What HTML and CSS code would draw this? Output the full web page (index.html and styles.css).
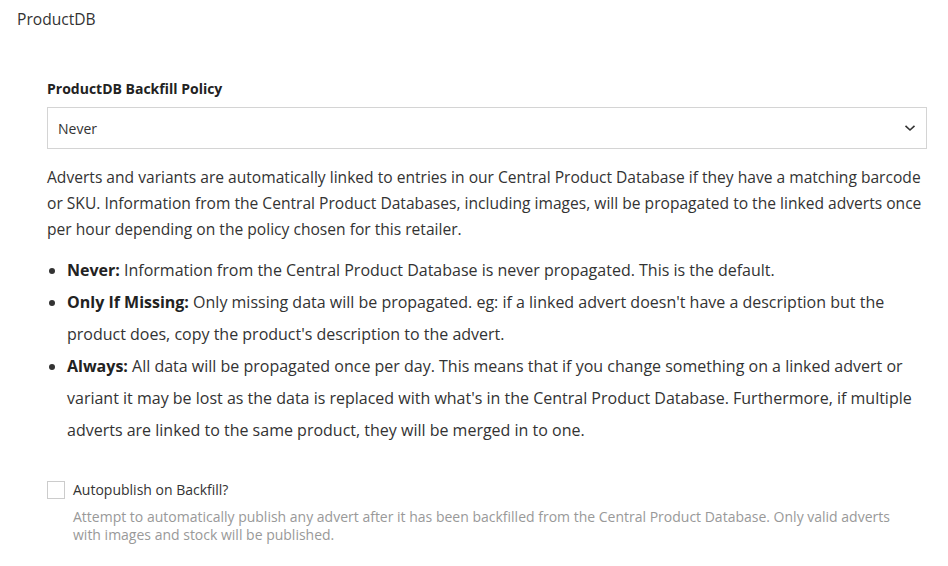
FILE: index.html
```html
<!DOCTYPE html>
<html>
<head>
<meta charset="utf-8">
<link rel="stylesheet" href="styles.css">
</head>
<body>
<div class="page">
  <h1 class="title">ProductDB</h1>
  <div class="section">
    <label class="field-label">ProductDB Backfill Policy</label>
    <div class="select">
      <span class="select-value">Never</span>
      <svg class="chevron" width="12" height="8" viewBox="0 0 12 8"><path d="M1.5 1.8 L6 6 L10.5 1.8" fill="none" stroke="#333" stroke-width="1.6"/></svg>
    </div>
    <p class="desc">Adverts and variants are automatically linked to entries in our Central Product Database if they have a matching barcode or SKU. Information from the Central Product Databases, including images, will be propagated to the linked adverts once per hour depending on the policy chosen for this retailer.</p>
    <ul class="policies">
      <li><b>Never:</b> Information from the Central Product Database is never propagated. This is the default.</li>
      <li><b>Only If Missing:</b> Only missing data will be propagated. eg: if a linked advert doesn't have a description but the product does, copy the product's description to the advert.</li>
      <li><b>Always:</b> All data will be propagated once per day. This means that if you change something on a linked advert or variant it may be lost as the data is replaced with what's in the Central Product Database. Furthermore, if multiple adverts are linked to the same product, they will be merged in to one.</li>
    </ul>
    <div class="check-row">
      <span class="checkbox"></span>
      <div class="check-text">
        <div class="check-label">Autopublish on Backfill?</div>
        <div class="check-help">Attempt to automatically publish any advert after it has been backfilled from the Central Product Database. Only valid adverts with images and stock will be published.</div>
      </div>
    </div>
  </div>
</div>
</body>
</html>
```
FILE: styles.css
```css
* { box-sizing: border-box; }
html, body { margin: 0; padding: 0; background: #fff; }
body {
  font-family: "Open Sans", "Liberation Sans", sans-serif;
  color: #333;
}
.page { padding: 8px 21px 0 17px; }
.title {
  margin: 0;
  font-size: 15.6px;
  font-weight: 400;
  line-height: 22px;
  color: #333;
}
.section { padding: 50px 0 0 30px; }
.field-label {
  display: block;
  font-size: 14px;
  font-weight: 700;
  line-height: 18px;
  color: #222;
  margin-bottom: 9px;
}
.select {
  height: 42px;
  border: 1px solid #d4d4d4;
  display: flex;
  align-items: center;
  justify-content: space-between;
  padding: 0 10px;
}
.select-value { font-size: 14px; color: #333; }
.chevron { display: block; }
.desc {
  margin: 15px 0 0;
  font-size: 15.6px;
  line-height: 26px;
  color: #333;
}
.policies {
  margin: 12px 0 0;
  padding-left: 20px;
  font-size: 16px;
  line-height: 32px;
  color: #333;
}
.policies b { font-weight: 700; color: #222; }
.check-row {
  display: flex;
  align-items: flex-start;
  gap: 8px;
  margin-top: 35px;
}
.checkbox {
  width: 18px;
  height: 18px;
  border: 1px solid #ccc;
  background: #fff;
  flex: none;
}
.check-text { flex: 1; }
.check-label {
  font-size: 14px;
  line-height: 18px;
  color: #333;
}
.check-help {
  margin-top: 9px;
  font-size: 14px;
  line-height: 18px;
  color: #999;
  padding-right: 30px;
}
```
